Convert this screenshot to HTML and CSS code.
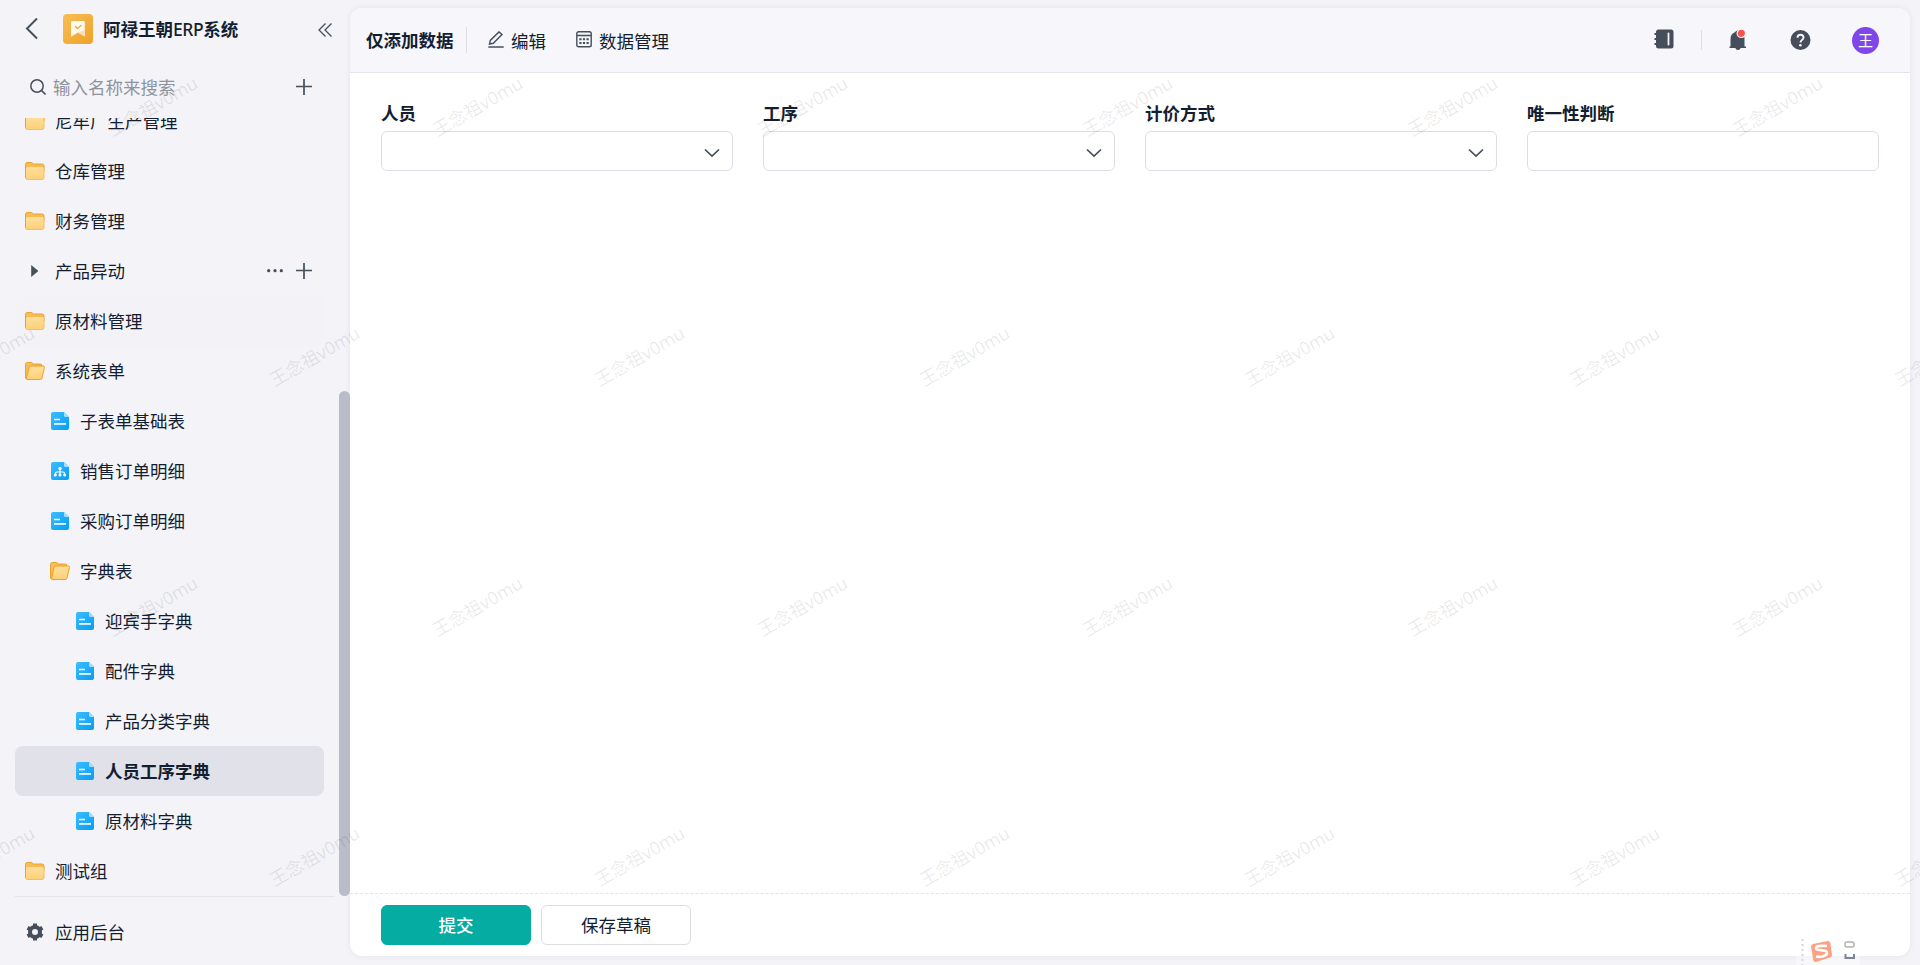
FILE: index.html
```html
<!DOCTYPE html>
<html lang="zh-CN">
  <head>
    <meta charset="UTF-8" />
    <meta name="viewport" content="width=device-width, initial-scale=1.0" />
    <title>阿禄王朝ERP系统</title>
    <link rel="stylesheet" href="styles.css" />
  </head>
  <body>
    <!-- Shared icons -->
    <svg class="sprite" width="0" height="0">
      <defs>
        <linearGradient id="folder-fill" x1="0" y1="0" x2="0" y2="1">
          <stop offset="0" stop-color="#ffe09a" />
          <stop offset="1" stop-color="#fdd07a" />
        </linearGradient>
        <linearGradient id="doc-fill" x1="0" y1="0" x2="1" y2="1">
          <stop offset="0" stop-color="#3dbdff" />
          <stop offset="1" stop-color="#059df5" />
        </linearGradient>
      </defs>
      <symbol id="folder" viewBox="0 0 20 20">
        <path d="M.5 3.500A2 2 0 0 1 2.500 1.500h4l2 1.500h8.500a2 2 0 0 1 2 2v5H.5z" fill="#f8bd55" stroke="#eda02c" />
        <rect x=".5" y="5.500" width="18.500" height="13" rx="2" fill="url(#folder-fill)" stroke="#f5b54a" stroke-width=".8" />
        <path d="M.5 4v12.500" stroke="#eda02c" />
      </symbol>
      <symbol id="folder-open" viewBox="0 0 20 20">
        <path d="M.5 17V3.500a2 2 0 0 1 2-2h4L8.500 3H15a2 2 0 0 1 2 2v8L14 18.500H2z" fill="#f8bd55" stroke="#eda02c" />
        <path d="M6 5h12.200q1.600 0 1.200 1.600L17 17q-.4 1.500-2 1.500H2.800q-1.600 0-1.200-1.500L4 6.600Q4.400 5 6 5z" fill="url(#folder-fill)" stroke="#eda02c" />
      </symbol>
      <symbol id="doc" viewBox="0 0 18 18">
        <path d="M2 0h11l5 5v11a2 2 0 0 1-2 2H2a2 2 0 0 1-2-2V2a2 2 0 0 1 2-2z" fill="url(#doc-fill)" />
        <path d="M13 0l5 5h-3.500A1.500 1.500 0 0 1 13 3.500z" fill="#a3e0ff" />
        <path d="M3 7.500h6M3 11.800h12" stroke="#fff" stroke-width="1.700" />
      </symbol>
      <symbol id="doc-flow" viewBox="0 0 18 18">
        <path d="M2 0h11l5 5v11a2 2 0 0 1-2 2H2a2 2 0 0 1-2-2V2a2 2 0 0 1 2-2z" fill="url(#doc-fill)" />
        <path d="M13 0l5 5h-3.500A1.500 1.500 0 0 1 13 3.500z" fill="#a3e0ff" />
        <path d="M9 7v6M4.500 13v-1.500q0-1.500 1.500-1.500h6q1.500 0 1.500 1.500V13" fill="none" stroke="#fff" stroke-width="1.200" />
        <g fill="#fff">
          <circle cx="9" cy="6.500" r="1.700" />
          <circle cx="4.300" cy="13" r="1.500" />
          <circle cx="9" cy="13" r="1.500" />
          <circle cx="13.700" cy="13" r="1.500" />
        </g>
      </symbol>
      <symbol id="plus" viewBox="0 0 16 16">
        <path d="M8 0v16M0 7.500h16" stroke="#464e5c" stroke-width="1.700" />
      </symbol>
      <symbol id="chevron" viewBox="0 0 16 10">
        <path d="M1 1.500l7 6.500 7-6.500" fill="none" stroke="#464e5c" stroke-width="1.700" />
      </symbol>
    </svg>

    <div class="app">
      <aside class="sidebar">
        <div class="app-header">
          <svg class="back" width="13" height="22" viewBox="0 0 13 22">
            <path d="M12 .5L2 10.500l10 10" fill="none" stroke="#464e5c" stroke-width="2" />
          </svg>
          <div class="app-logo">
            <svg width="16" height="18" viewBox="0 0 16 18">
              <path d="M2.500 1h11q1.300 0 1.300 1.300v14.200L8 12.500 1.500 16.500Q1 16.700 1 16V2.300Q1 1 2.500 1z" fill="#fffaf0" />
              <path d="M14.800 10v6.500L8 12.500z" fill="#fbdfae" />
              <path d="M5 6l2.500 2.500L11.500 5" fill="none" stroke="#f2ac38" stroke-width="1.300" />
            </svg>
          </div>
          <span class="app-name">阿禄王朝<span class="latin">ERP</span>系统</span>
          <svg class="collapse" width="14" height="14" viewBox="0 0 14 14">
            <path d="M7.500.5L1 7l6.500 6.500M13.500.5L7 7l6.500 6.500" fill="none" stroke="#464e5c" stroke-width="1.300" />
          </svg>
        </div>

        <div class="search">
          <svg width="16" height="16" viewBox="0 0 16 16">
            <circle cx="7" cy="7" r="6.200" fill="none" stroke="#464e5c" stroke-width="1.500" />
            <path d="M11.500 11.500l4 4" stroke="#464e5c" stroke-width="1.600" />
          </svg>
          <span class="placeholder">输入名称来搜索</span>
          <svg class="add" width="16" height="16"><use href="#plus" /></svg>
        </div>

        <div class="menu">
          <ul class="menu-list">
            <li class="menu-item"><svg width="20" height="20"><use href="#folder" /></svg>尼牟厂生产管理</li>
            <li class="menu-item"><svg width="20" height="20"><use href="#folder" /></svg>仓库管理</li>
            <li class="menu-item"><svg width="20" height="20"><use href="#folder" /></svg>财务管理</li>
            <li class="menu-item">
              <svg width="20" height="20" viewBox="0 0 20 20"><path d="M6.500 4.500l6.500 5.500-6.500 5.500z" fill="#464e5c" stroke="#464e5c" stroke-linejoin="round" stroke-width=".6" /></svg>产品异动
              <span class="menu-actions">
                <svg width="16" height="4" viewBox="0 0 16 4" fill="#464e5c"><circle cx="1.700" cy="1.700" r="1.600" /><circle cx="8" cy="1.700" r="1.600" /><circle cx="14.300" cy="1.700" r="1.600" /></svg>
                <svg width="16" height="16"><use href="#plus" /></svg>
              </span>
            </li>
            <li class="menu-item hover"><svg width="20" height="20"><use href="#folder" /></svg>原材料管理</li>
            <li class="menu-item"><svg width="20" height="20"><use href="#folder-open" /></svg>系统表单</li>
            <li class="menu-item level-2"><svg class="doc" width="18" height="18"><use href="#doc" /></svg>子表单基础表</li>
            <li class="menu-item level-2"><svg class="doc" width="18" height="18"><use href="#doc-flow" /></svg>销售订单明细</li>
            <li class="menu-item level-2"><svg class="doc" width="18" height="18"><use href="#doc" /></svg>采购订单明细</li>
            <li class="menu-item level-2"><svg width="20" height="20"><use href="#folder-open" /></svg>字典表</li>
            <li class="menu-item level-3"><svg class="doc" width="18" height="18"><use href="#doc" /></svg>迎宾手字典</li>
            <li class="menu-item level-3"><svg class="doc" width="18" height="18"><use href="#doc" /></svg>配件字典</li>
            <li class="menu-item level-3"><svg class="doc" width="18" height="18"><use href="#doc" /></svg>产品分类字典</li>
            <li class="menu-item level-3 active"><svg class="doc" width="18" height="18"><use href="#doc" /></svg>人员工序字典</li>
            <li class="menu-item level-3"><svg class="doc" width="18" height="18"><use href="#doc" /></svg>原材料字典</li>
            <li class="menu-item"><svg width="20" height="20"><use href="#folder" /></svg>测试组</li>
          </ul>
          <div class="scrollbar"></div>
        </div>

        <div class="settings">
          <svg width="20" height="18" viewBox="0 0 20 18">
            <circle cx="10" cy="9" r="5" fill="none" stroke="#464e5c" stroke-width="4" />
            <path d="M10 .4v3M10 14.600v3M2.600 4.700l2.600 1.500M14.800 11.800l2.600 1.500M2.600 13.300l2.600-1.500M14.800 6.200l2.600-1.500" stroke="#464e5c" stroke-width="4" />
          </svg>
          应用后台
        </div>
      </aside>

      <main class="panel">
        <header class="toolbar">
          <h1 class="page-title">仅添加数据</h1>
          <span class="tool edit">
            <svg width="16" height="17" viewBox="0 0 16 17" fill="none" stroke="#464e5c" stroke-width="1.400">
              <path d="M1.500 13l.8-3.600L11 .9l3 2.700L5.300 12.300zM.3 16h15.400" />
            </svg>
            编辑
          </span>
          <span class="tool">
            <svg width="16" height="17" viewBox="0 0 16 17" fill="none" stroke="#464e5c" stroke-width="1.400">
              <rect x=".8" y=".8" width="14.400" height="15" rx="1.800" />
              <path d="M1 4.500h14" />
              <path d="M3.300 8.200h9.400M3.300 12h9.400" stroke-width="2" stroke-dasharray="2.200 1.400" />
            </svg>
            数据管理
          </span>

          <div class="toolbar-right">
            <svg class="notebook" width="20" height="20" viewBox="0 0 20 20">
              <rect x="2" y=".5" width="17.500" height="19" rx="2.500" fill="#464e5c" />
              <path d="M.5 5H4M.5 10H4M.5 15H4" stroke="#464e5c" stroke-width="1.800" />
              <path d="M14.500 4.500v11" stroke="#f6f6fa" stroke-width="1.800" stroke-linecap="round" />
            </svg>
            <span class="divider"></span>
            <svg class="bell" width="18" height="22" viewBox="0 0 18 22">
              <path d="M1.500 17.500V10a7 7 0 0 1 4-6.400Q7 1.500 9 1.500t3 2A7.500 7.500 0 0 1 15.500 10v7.500H17V19h-5.300a2.800 2.800 0 0 1-5.400 0H.5v-1.500z" fill="#464e5c" />
              <circle cx="12.300" cy="4.300" r="4.200" fill="#f9524f" stroke="#f6f6fa" stroke-width="1.200" />
            </svg>
            <svg class="help" width="21" height="21" viewBox="0 0 21 21">
              <circle cx="10.500" cy="10" r="10" fill="#464e5c" />
              <path d="M7.500 7.700q0-3 3-3t3 2.800q0 1.500-1.500 2.500t-1.500 2.500" fill="none" stroke="#f6f6fa" stroke-width="1.900" />
              <circle cx="10.400" cy="15.200" r="1.300" fill="#f6f6fa" />
            </svg>
            <span class="avatar">王</span>
          </div>
        </header>

        <section class="form">
          <div class="field">
            <label>人员</label>
            <div class="control"><svg width="16" height="10"><use href="#chevron" /></svg></div>
          </div>
          <div class="field">
            <label>工序</label>
            <div class="control"><svg width="16" height="10"><use href="#chevron" /></svg></div>
          </div>
          <div class="field">
            <label>计价方式</label>
            <div class="control"><svg width="16" height="10"><use href="#chevron" /></svg></div>
          </div>
          <div class="field">
            <label>唯一性判断</label>
            <div class="control"></div>
          </div>
        </section>

        <footer class="actions">
          <button class="btn primary">提交</button>
          <button class="btn">保存草稿</button>
        </footer>
      </main>
    </div>

    <div class="watermark">
      <div class="mark-row"><span>王念祖v0mu</span><span>王念祖v0mu</span><span>王念祖v0mu</span><span>王念祖v0mu</span><span>王念祖v0mu</span><span>王念祖v0mu</span></div>
      <div class="mark-row shifted"><span>王念祖v0mu</span><span>王念祖v0mu</span><span>王念祖v0mu</span><span>王念祖v0mu</span><span>王念祖v0mu</span><span>王念祖v0mu</span><span>王念祖v0mu</span></div>
      <div class="mark-row"><span>王念祖v0mu</span><span>王念祖v0mu</span><span>王念祖v0mu</span><span>王念祖v0mu</span><span>王念祖v0mu</span><span>王念祖v0mu</span></div>
      <div class="mark-row shifted"><span>王念祖v0mu</span><span>王念祖v0mu</span><span>王念祖v0mu</span><span>王念祖v0mu</span><span>王念祖v0mu</span><span>王念祖v0mu</span><span>王念祖v0mu</span></div>
    </div>

    <!-- Input method bar peeking in from the bottom edge -->
    <div class="ime">
      <svg width="64" height="27" viewBox="0 0 64 27">
        <path d="M6.500 1v26" stroke="#d5d5d8" stroke-width="2" stroke-dasharray="2 3" />
        <path d="M17 6l15-3q2 0 2.400 2L36 17q0 2-2 2.600L20 24q-2 .3-2.600-1.600L15 8.500Q15 6.500 17 6z" fill="#fba284" />
        <path d="M31 8q-11-1-11 2.500c0 3 11 0 11 4.500 0 3-7 4.500-11 3.500" fill="none" stroke="#fff" stroke-width="2.600" />
        <rect x="49" y="4" width="9" height="5" rx="2" fill="none" stroke="#b5b0b0" stroke-width="1.500" />
        <path d="M49.500 16v4h8.500v-4" fill="none" stroke="#7c8496" stroke-width="2" />
      </svg>
    </div>
  </body>
</html>
```
FILE: styles.css
```css
* {
  box-sizing: border-box;
}

body {
  margin: 0;
  height: 100vh;
  overflow: hidden;
  position: relative;
  background-color: #f3f3f8;
  color: #141e31;
  font-family: "Noto Sans", "Noto Sans CJK SC", sans-serif;
  font-size: 17.5px;
  line-height: 26px;
}

svg {
  display: block;
  flex-shrink: 0;
}

.sprite {
  position: absolute;
}

.app {
  display: flex;
  height: 100%;
}

/* Sidebar */
.sidebar {
  width: 350px;
  display: flex;
  flex-direction: column;
  flex-shrink: 0;
}

.app-header {
  display: flex;
  align-items: center;
  height: 57px;
  padding: 0 18px 0 25px;
}

.app-logo {
  display: flex;
  align-items: center;
  justify-content: center;
  width: 30px;
  height: 30px;
  margin: 0 10px 0 25px;
  border-radius: 4px;
  background: linear-gradient(135deg, #f9bd55, #eda329);
}

.app-name {
  font-weight: 600;
}

.app-name .latin {
  font-weight: 500;
  letter-spacing: -0.4px;
}

.collapse {
  margin: 2px 0 0 auto;
}

.search {
  display: flex;
  align-items: center;
  height: 60px;
  padding: 0 38px 0 30px;
}

.placeholder {
  margin-left: 7px;
  color: #8f939e;
}

.add {
  margin-left: auto;
}

.menu {
  position: relative;
  height: 778px;
  margin-top: 1px;
  overflow: hidden;
}

.menu-list {
  list-style: none;
  margin: -22px 0 0;
  padding: 0 26px 0 15px;
}

.menu-item {
  display: flex;
  align-items: center;
  gap: 10px;
  height: 50px;
  padding: 0 12px 0 10px;
  border-radius: 8px;
}

.menu-item .doc {
  margin: 0 1px;
}

.menu-item.hover {
  background-color: #f2f2f7;
}

.menu-item.active {
  background-color: #e1e1e9;
  font-weight: 600;
}

.menu-item.level-2 {
  padding-left: 35px;
}

.menu-item.level-3 {
  padding-left: 60px;
}

.menu-actions {
  display: flex;
  align-items: center;
  gap: 13px;
  margin-left: auto;
}

.scrollbar {
  position: absolute;
  right: 0;
  top: 273px;
  width: 11px;
  height: 505px;
  border-radius: 6px;
  background-color: #babdc7;
}

.settings {
  display: flex;
  align-items: center;
  gap: 10px;
  flex: 1;
  margin: 0 15px;
  padding: 2px 0 0 10px;
  border-top: 1px solid #e4e5eb;
}

/* Main panel */
.panel {
  display: flex;
  flex-direction: column;
  flex: 1;
  margin: 8px 10px 9px 0;
  border-radius: 12px;
  background-color: #fff;
  box-shadow: 0 0 6px rgba(20, 30, 49, 0.07);
  overflow: hidden;
}

.toolbar {
  display: flex;
  align-items: center;
  height: 65px;
  padding: 0 31px 0 16px;
  border-bottom: 1px solid #e4e5ec;
  background-color: #f6f6fb;
}

.page-title {
  margin: 0;
  padding-right: 12px;
  border-right: 1px solid #dddfe6;
  font-size: 17.5px;
  font-weight: 600;
}

.tool {
  display: flex;
  align-items: center;
  gap: 7px;
  margin-left: 30px;
  padding-top: 1px;
}

.tool svg {
  margin-top: -3px;
}

.tool.edit {
  margin-left: 21.5px;
}

.toolbar-right {
  display: flex;
  align-items: center;
  margin-left: auto;
}

.notebook {
  margin-top: -2px;
}

.divider {
  width: 1px;
  height: 20px;
  margin: 0 27px 0 27px;
  background-color: #dddfe6;
}

.help {
  margin: 0 41px 0 43px;
}

.avatar {
  width: 27px;
  height: 27px;
  border-radius: 50%;
  background-color: #7f47e9;
  color: #fff;
  font-size: 15px;
  line-height: 27px;
  text-align: center;
}

.form {
  display: grid;
  grid-template-columns: repeat(4, 1fr);
  gap: 30px;
  flex: 1;
  align-content: start;
  padding: 27px 31px;
}

.field label {
  display: block;
  margin-bottom: 5px;
  font-weight: 600;
}

.control {
  display: flex;
  align-items: center;
  justify-content: flex-end;
  height: 40px;
  padding: 3px 12px 0 0;
  border: 1px solid #dcdee7;
  border-radius: 6px;
}

.actions {
  display: flex;
  gap: 10px;
  height: 63px;
  padding: 11px 31px;
  border-top: 1px dashed #e3e5e8;
}

.btn {
  width: 150px;
  height: 40px;
  padding: 0;
  border: 1px solid #dcdee7;
  border-radius: 6px;
  background-color: #fff;
  color: #141e31;
  font: inherit;
}

.btn.primary {
  border-color: #05aca2;
  background-color: #05aca2;
  color: #fff;
  font-weight: 500;
}

/* Repeating user name laid over the whole window */
.watermark {
  position: absolute;
  inset: 0;
  overflow: hidden;
  pointer-events: none;
  color: rgba(0, 0, 0, 0.09);
  font-size: 17.8px;
}

.mark-row {
  display: flex;
  align-items: center;
  width: max-content;
  height: 250px;
  margin-left: -10px;
}

.mark-row:first-child {
  margin-top: -19px;
}

.mark-row.shifted {
  margin-left: -173px;
}

.mark-row span {
  width: 325px;
  text-align: center;
  transform: rotate(-30deg);
}

.ime {
  position: absolute;
  left: 1796px;
  bottom: 0;
  background-color: rgba(255, 255, 255, 0.4);
}
```
